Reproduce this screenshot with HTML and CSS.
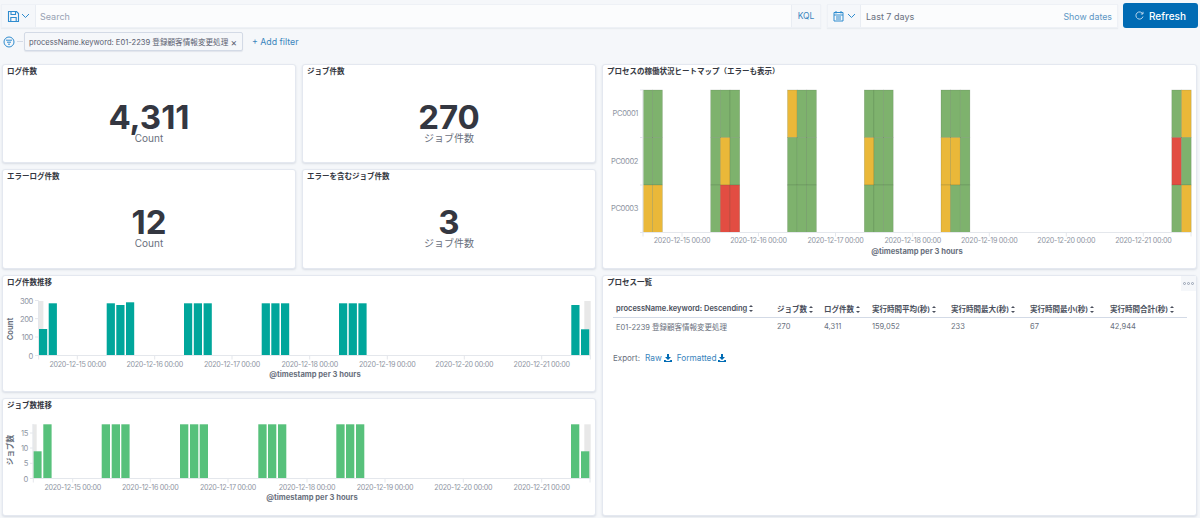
FILE: index.html
```html
<!DOCTYPE html>
<html lang="ja">
<head>
<meta charset="utf-8">
<title>Dashboard</title>
<link rel="stylesheet" href="styles.css">
</head>
<body>
<header class="topbar">
  <div class="query">
    <button class="prepend">
      <svg class="ic" width="13" height="13" viewBox="0 0 13 13"><path d="M1.5 1.5h8l2 2v8h-10z M4 1.5v3h4.500v-3 M3.800 11.500v-4h5.400v4" fill="none" stroke="#2f8ccf" stroke-width="1.100"/></svg>
      <svg class="chev" width="9" height="6" viewBox="0 0 9 6"><path d="M1 1l3.500 3.500L8 1" fill="none" stroke="#2f8ccf" stroke-width="1"/></svg>
    </button>
    <div class="search">Search</div>
    <div class="kql">KQL</div>
  </div>
  <div class="date">
    <button class="prepend cal">
      <svg class="ic" width="11" height="12" viewBox="0 0 11 12"><path d="M1 2.500h9v8.500h-9z M1 5h9 M3 1v2.500 M8 1v2.500 M3 7h5 M3 9h5" fill="none" stroke="#2f8ccf" stroke-width="1"/></svg>
      <svg class="chev" width="9" height="6" viewBox="0 0 9 6"><path d="M1 1l3.500 3.500L8 1" fill="none" stroke="#2f8ccf" stroke-width="1"/></svg>
    </button>
    <div class="range">Last 7 days</div>
    <div class="show">Show dates</div>
  </div>
  <button class="refresh">
    <svg width="9" height="9" viewBox="0 0 9 9"><path d="M7.800 3A3.600 3.600 0 1 0 8 5.500 M8 .8V3H5.800" fill="none" stroke="#b9d6ec" stroke-width="1"/></svg>
    Refresh
  </button>
</header>

<div class="filters">
  <svg class="filter-ic" width="12" height="12" viewBox="0 0 12 12"><circle cx="6" cy="6" r="5" fill="none" stroke="#2f8ccf" stroke-width="1"/><path d="M3 4.200h6 M4 6.200h4 M5 8.200h2" stroke="#2f8ccf" stroke-width="1"/></svg>
  <span class="dash-line"></span>
  <div class="pill"><span>processName.keyword: E01-2239 登録顧客情報変更処理</span><span class="x">×</span></div>
  <div class="add">+ Add filter</div>
</div>

<main class="dash">
  <section class="panel">
    <h2>ログ件数</h2>
    <div class="metric"><div class="num">4,311</div><div class="lab">Count</div></div>
  </section>
  <section class="panel">
    <h2>ジョブ件数</h2>
    <div class="metric"><div class="num">270</div><div class="lab">ジョブ件数</div></div>
  </section>
  <section class="panel heat">
    <h2>プロセスの稼働状況ヒートマップ（エラーも表示）</h2>
    <svg class="chart" width="593" height="187" viewBox="603 81 593 187">
      <g class="cells">
        <rect class="g" x="643" y="90" width="9.700" height="47.500"/><rect class="g" x="652.700" y="90" width="9.700" height="47.500"/>
        <rect class="g" x="643" y="137.500" width="9.700" height="47.500"/><rect class="g" x="652.700" y="137.500" width="9.700" height="47.500"/>
        <rect class="y" x="643" y="185" width="9.700" height="47.500"/><rect class="y" x="652.700" y="185" width="9.700" height="47.500"/>

        <rect class="g" x="710.700" y="90" width="9.700" height="47.500"/><rect class="g" x="720.300" y="90" width="9.700" height="47.500"/><rect class="g" x="730" y="90" width="9.700" height="47.500"/>
        <rect class="g" x="710.700" y="137.500" width="9.700" height="47.500"/><rect class="y" x="720.300" y="137.500" width="9.700" height="47.500"/><rect class="g" x="730" y="137.500" width="9.700" height="47.500"/>
        <rect class="g" x="710.700" y="185" width="9.700" height="47.500"/><rect class="r" x="720.300" y="185" width="9.700" height="47.500"/><rect class="r" x="730" y="185" width="9.700" height="47.500"/>

        <rect class="y" x="787.500" y="90" width="9.700" height="47.500"/><rect class="g" x="797.100" y="90" width="9.700" height="47.500"/><rect class="g" x="806.700" y="90" width="9.700" height="47.500"/>
        <rect class="g" x="787.500" y="137.500" width="9.700" height="47.500"/><rect class="g" x="797.100" y="137.500" width="9.700" height="47.500"/><rect class="g" x="806.700" y="137.500" width="9.700" height="47.500"/>
        <rect class="g" x="787.500" y="185" width="9.700" height="47.500"/><rect class="g" x="797.100" y="185" width="9.700" height="47.500"/><rect class="g" x="806.700" y="185" width="9.700" height="47.500"/>

        <rect class="g" x="864.300" y="90" width="9.700" height="47.500"/><rect class="g" x="873.900" y="90" width="9.700" height="47.500"/><rect class="g" x="883.500" y="90" width="9.700" height="47.500"/>
        <rect class="y" x="864.300" y="137.500" width="9.700" height="47.500"/><rect class="g" x="873.900" y="137.500" width="9.700" height="47.500"/><rect class="g" x="883.500" y="137.500" width="9.700" height="47.500"/>
        <rect class="g" x="864.300" y="185" width="9.700" height="47.500"/><rect class="g" x="873.900" y="185" width="9.700" height="47.500"/><rect class="g" x="883.500" y="185" width="9.700" height="47.500"/>

        <rect class="g" x="941" y="90" width="9.700" height="47.500"/><rect class="g" x="950.600" y="90" width="9.700" height="47.500"/><rect class="g" x="960.200" y="90" width="9.700" height="47.500"/>
        <rect class="y" x="941" y="137.500" width="9.700" height="47.500"/><rect class="y" x="950.600" y="137.500" width="9.700" height="47.500"/><rect class="g" x="960.200" y="137.500" width="9.700" height="47.500"/>
        <rect class="y" x="941" y="185" width="9.700" height="47.500"/><rect class="g" x="950.600" y="185" width="9.700" height="47.500"/><rect class="g" x="960.200" y="185" width="9.700" height="47.500"/>

        <rect class="g" x="1171.800" y="90" width="9.700" height="47.500"/><rect class="y" x="1181.500" y="90" width="9.700" height="47.500"/>
        <rect class="r" x="1171.800" y="137.500" width="9.700" height="47.500"/><rect class="g" x="1181.500" y="137.500" width="9.700" height="47.500"/>
        <rect class="g" x="1171.800" y="185" width="9.700" height="47.500"/><rect class="y" x="1181.500" y="185" width="9.700" height="47.500"/>
      </g>
      <path class="axis" d="M643 232.500H1191 M643 90V232.500 M640 90h3 M640 137.500h3 M640 185h3 M640 232.500h3 M643 232.500v4 M682 232.500v4 M758.500 232.500v4 M835.500 232.500v4 M912.700 232.500v4 M989.300 232.500v4 M1066.300 232.500v4 M1143.300 232.500v4 M1191 232.500v4"/>
      <text class="yl" x="638" y="116.300">PC0001</text>
      <text class="yl" x="638" y="163.800">PC0002</text>
      <text class="yl" x="638" y="211.300">PC0003</text>
      <text class="xl" x="682" y="243">2020-12-15 00:00</text>
      <text class="xl" x="758.500" y="243">2020-12-16 00:00</text>
      <text class="xl" x="835.500" y="243">2020-12-17 00:00</text>
      <text class="xl" x="912.700" y="243">2020-12-18 00:00</text>
      <text class="xl" x="989.300" y="243">2020-12-19 00:00</text>
      <text class="xl" x="1066.300" y="243">2020-12-20 00:00</text>
      <text class="xl" x="1143.300" y="243">2020-12-21 00:00</text>
      <text class="at" x="917" y="254">@timestamp per 3 hours</text>
    </svg>
  </section>

  <section class="panel">
    <h2>エラーログ件数</h2>
    <div class="metric"><div class="num">12</div><div class="lab">Count</div></div>
  </section>
  <section class="panel">
    <h2>エラーを含むジョブ件数</h2>
    <div class="metric"><div class="num">3</div><div class="lab">ジョブ件数</div></div>
  </section>

  <section class="panel wide">
    <h2>ログ件数推移</h2>
    <svg class="chart" width="592" height="99" viewBox="3 292 592 99">
      <rect class="bg" x="38.400" y="301" width="5" height="54.500"/>
      <rect class="bg" x="584.300" y="301" width="6.400" height="54.500"/>
      <g class="teal">
        <rect x="39" y="329" width="8.200" height="26.500"/><rect x="48.700" y="303.300" width="8.200" height="52.200"/>
        <rect x="106.700" y="303.300" width="8.200" height="52.200"/><rect x="116.300" y="305" width="8.200" height="50.500"/><rect x="126" y="302.300" width="8.200" height="53.200"/>
        <rect x="184" y="303.300" width="8.200" height="52.200"/><rect x="193.800" y="303.300" width="8.200" height="52.200"/><rect x="203.600" y="303.300" width="8.200" height="52.200"/>
        <rect x="261.700" y="303.300" width="8.200" height="52.200"/><rect x="271.300" y="303.300" width="8.200" height="52.200"/><rect x="281" y="303.300" width="8.200" height="52.200"/>
        <rect x="339" y="303.300" width="8.200" height="52.200"/><rect x="348.700" y="303.300" width="8.200" height="52.200"/><rect x="358.400" y="303.300" width="8.200" height="52.200"/>
        <rect x="571.300" y="305" width="8.200" height="50.500"/><rect x="581" y="329.300" width="8.200" height="26.200"/>
      </g>
      <path class="axis" d="M38.500 355.500H590.500 M38.500 300.500V355.500 M35 300.500h3.500 M35 318.700h3.500 M35 337h3.500 M35 355.500h3.500 M38.700 355.500v4 M77.300 355.500v4 M154.700 355.500v4 M232 355.500v4 M309.700 355.500v4 M387.300 355.500v4 M464.300 355.500v4 M541.700 355.500v4 M590.300 355.500v4"/>
      <text class="yl" x="33" y="303.500">300</text>
      <text class="yl" x="33" y="322">200</text>
      <text class="yl" x="33" y="340.300">100</text>
      <text class="yl" x="33" y="358.500">0</text>
      <text class="at" transform="translate(13 329) rotate(-90)">Count</text>
      <text class="xl" x="77.700" y="366.500">2020-12-15 00:00</text>
      <text class="xl" x="154.700" y="366.500">2020-12-16 00:00</text>
      <text class="xl" x="232" y="366.500">2020-12-17 00:00</text>
      <text class="xl" x="309.700" y="366.500">2020-12-18 00:00</text>
      <text class="xl" x="387.300" y="366.500">2020-12-19 00:00</text>
      <text class="xl" x="464.300" y="366.500">2020-12-20 00:00</text>
      <text class="xl" x="541.700" y="366.500">2020-12-21 00:00</text>
      <text class="at" x="315" y="377">@timestamp per 3 hours</text>
    </svg>
  </section>

  <section class="panel table-panel">
    <h2>プロセス一覧</h2>
    <div class="opts"><i></i><i></i><i></i></div>
    <div class="table-wrap">
      <table>
        <thead>
          <tr>
            <th class="c1">processName.keyword: Descending<span class="sort"></span></th>
            <th class="c2">ジョブ数<span class="sort"></span></th>
            <th class="c3">ログ件数<span class="sort"></span></th>
            <th class="c4">実行時間平均(秒)<span class="sort"></span></th>
            <th class="c5">実行時間最大(秒)<span class="sort"></span></th>
            <th class="c6">実行時間最小(秒)<span class="sort"></span></th>
            <th class="c7">実行時間合計(秒)<span class="sort"></span></th>
          </tr>
        </thead>
        <tbody>
          <tr>
            <td>E01-2239 登録顧客情報変更処理</td>
            <td>270</td><td>4,311</td><td>159,052</td><td>233</td><td>67</td><td>42,944</td>
          </tr>
        </tbody>
      </table>
      <div class="export">
        <span class="export-label">Export:</span>
        <a>Raw <svg width="8" height="8" viewBox="0 0 8 8"><path d="M3 0h2v3h2L4 6 1 3h2z M0 6h1.500l1 1h3l1-1H8v2H0z" fill="#006bb4"/></svg></a>
        <a>Formatted <svg width="8" height="8" viewBox="0 0 8 8"><path d="M3 0h2v3h2L4 6 1 3h2z M0 6h1.500l1 1h3l1-1H8v2H0z" fill="#006bb4"/></svg></a>
      </div>
    </div>
  </section>

  <section class="panel wide">
    <h2>ジョブ数推移</h2>
    <svg class="chart" width="592" height="100" viewBox="3 415 592 100">
      <rect class="bg" x="32.700" y="424.300" width="4" height="54"/>
      <rect class="bg" x="584.300" y="424.300" width="6.400" height="54"/>
      <g class="mint">
        <rect x="33.300" y="451.300" width="8.300" height="27"/><rect x="43.300" y="424.300" width="8.300" height="54"/>
        <rect x="101.700" y="424.300" width="8.300" height="54"/><rect x="111.700" y="424.300" width="8.300" height="54"/><rect x="121.300" y="424.300" width="8.300" height="54"/>
        <rect x="180" y="424.300" width="8.300" height="54"/><rect x="190" y="424.300" width="8.300" height="54"/><rect x="199.700" y="424.300" width="8.300" height="54"/>
        <rect x="258.300" y="424.300" width="8.300" height="54"/><rect x="268" y="424.300" width="8.300" height="54"/><rect x="278" y="424.300" width="8.300" height="54"/>
        <rect x="336.300" y="424.300" width="8.300" height="54"/><rect x="346" y="424.300" width="8.300" height="54"/><rect x="356" y="424.300" width="8.300" height="54"/>
        <rect x="571" y="424.300" width="8.300" height="54"/><rect x="581" y="451.300" width="8.300" height="27"/>
      </g>
      <path class="axis" d="M33 478.500H590.500 M33 424V478.500 M30 433h3 M30 448h3 M30 463.300h3 M30 478.500h3 M33.300 478.500v4 M72.700 478.500v4 M150.300 478.500v4 M228 478.500v4 M307 478.500v4 M385 478.500v4 M463.300 478.500v4 M541.700 478.500v4 M590 478.500v4"/>
      <text class="yl" x="28" y="436">15</text>
      <text class="yl" x="28" y="451">10</text>
      <text class="yl" x="28" y="466.300">5</text>
      <text class="yl" x="28" y="481.500">0</text>
      <text class="at" transform="translate(13 450) rotate(-90)">ジョブ数</text>
      <text class="xl" x="72.700" y="490">2020-12-15 00:00</text>
      <text class="xl" x="150.300" y="490">2020-12-16 00:00</text>
      <text class="xl" x="228" y="490">2020-12-17 00:00</text>
      <text class="xl" x="307" y="490">2020-12-18 00:00</text>
      <text class="xl" x="385" y="490">2020-12-19 00:00</text>
      <text class="xl" x="463.300" y="490">2020-12-20 00:00</text>
      <text class="xl" x="541.700" y="490">2020-12-21 00:00</text>
      <text class="at" x="312" y="500">@timestamp per 3 hours</text>
    </svg>
  </section>
</main>
</body>
</html>
```
FILE: styles.css
```css
* { box-sizing: border-box; }
html, body { margin: 0; height: 518px; overflow: hidden; }
body {
  background: #f5f7fa;
  color: #343741;
  font-family: Inter, "Noto Sans CJK JP", sans-serif;
  font-size: 9px;
}
button { font: inherit; border: 0; padding: 0; background: none; }

.topbar { display: flex; height: 25px; margin: 3px 2px 0 1px; }
.query, .date {
  display: flex;
  align-items: center;
  height: 24px;
  margin-top: 1px;
  background: #fbfcfd;
  border: 1px solid #eef1f6;
  box-shadow: 0 1px 1px rgba(152, 162, 179, .12);
}
.query { width: 820px; }
.date { width: 291px; margin: 1px 5px 0 6px; }
.prepend {
  display: flex;
  align-items: center;
  gap: 1px;
  height: 100%;
  width: 34px;
  padding-left: 5px;
  background: #f5f7fa;
  border-right: 1px solid #e9edf3;
}
.cal { width: 33px; padding-left: 5px; gap: 3px; }
.search { flex: 1; padding-left: 4px; color: #98a2b3; }
.kql {
  width: 29px;
  height: 100%;
  line-height: 22px;
  text-align: center;
  color: #3a85bd;
  font-size: 8.500px;
  background: #f5f7fa;
  border-left: 1px solid #e9edf3;
}
.range { flex: 1; padding-left: 5px; color: #69707d; }
.show { padding-right: 5px; color: #5b96c4; font-size: 8.800px; }
.refresh {
  display: flex;
  align-items: center;
  justify-content: center;
  gap: 5px;
  width: 75px;
  background: #006bb4;
  color: #fff;
  font-size: 10px;
  font-weight: 500;
  border-radius: 3px;
}

.filters { display: flex; align-items: center; height: 19px; margin: 4px 0 0 3px; }
.filter-ic { flex: none; }
.dash-line { width: 6px; height: 1px; margin: 0 1px 0 2px; background: #d3dae6; }
.pill {
  display: flex;
  align-items: center;
  justify-content: space-between;
  flex: none;
  width: 219px;
  height: 19px;
  padding: 0 5px 0 4px;
  font-size: 7.600px;
  color: #5a6070;
  background: #f5f7fa;
  border: 1px solid #d3dae6;
  border-radius: 2px;
  box-shadow: 0 1px 1px rgba(152, 162, 179, .2);
  white-space: nowrap;
}
.x { font-size: 10px; }
.add { margin-left: 9px; color: #3a85bd; font-size: 8.800px; }

.dash {
  display: grid;
  grid-template-columns: 294px 294px 595px;
  grid-template-rows: 99px 100px 117px 118px;
  gap: 6px;
  margin: 13px 0 0 2px;
}
.panel {
  position: relative;
  display: flex;
  flex-direction: column;
  min-width: 0;
  background: #fff;
  border: 1px solid #e4e8f0;
  border-radius: 3px;
  box-shadow: 0 1px 2px rgba(152, 162, 179, .3);
}
.panel h2 {
  flex: none;
  height: 16px;
  margin: 0;
  padding: 1px 0 0 4px;
  font-size: 7.500px;
  line-height: 12px;
  font-weight: 600;
  color: #343741;
  white-space: nowrap;
}
.heat { grid-column: 3; grid-row: 1 / span 2; }
.wide { grid-column: 1 / span 2; }
.table-panel { grid-column: 3; grid-row: 3 / span 2; }

.metric { flex: 1; display: flex; flex-direction: column; align-items: center; padding-top: 20px; }
.num {
  font-size: 33px;
  line-height: 32px;
  font-weight: 700;
  color: #343741;
}
.lab { font-size: 10px; line-height: 10px; color: #69707d; }

.chart { display: block; }
.axis { fill: none; stroke: #e4e7ec; stroke-width: 1; }
.cells rect { stroke: rgba(70, 90, 60, .28); stroke-width: .6; }
.g { fill: #7eb26d; }
.y { fill: #eab839; }
.r { fill: #e24d42; }
.bg { fill: #e8e8e8; }
.teal rect { fill: #00a69b; }
.mint rect { fill: #57c17b; }
.xl { font-size: 7.200px; letter-spacing: -.3px; fill: #8f96a3; text-anchor: middle; }
.yl { font-size: 7.600px; letter-spacing: -.4px; fill: #8f96a3; text-anchor: end; }
.at { font-size: 7.600px; font-weight: 700; fill: #69707d; text-anchor: middle; }

.opts {
  position: absolute;
  top: 0;
  right: 0;
  display: flex;
  align-items: center;
  justify-content: center;
  gap: 1px;
  width: 15px;
  height: 15px;
  background: #f5f7fa;
}
.opts i { width: 3px; height: 3px; border: 1px solid #98a2b3; border-radius: 50%; }

.table-wrap { padding: 7px 9px 0 10px; }
table { width: 574px; border-collapse: collapse; table-layout: fixed; }
th, td { padding: 0 0 0 3px; text-align: left; white-space: nowrap; }
th {
  height: 18px;
  padding-top: 2px;
  font-size: 7.500px;
  font-weight: 600;
  color: #4a4f5c;
  border-bottom: 1px solid #d3dae6;
}
td { height: 18px; font-size: 7.500px; color: #69707d; }
.c1 { width: 161px; }
.c2 { width: 47px; }
.c3 { width: 48px; }
.c4 { width: 79px; }
.c5 { width: 79px; }
.c6 { width: 80px; }
.sort {
  display: inline-block;
  position: relative;
  width: 5px;
  height: 7px;
  margin-left: 2px;
  vertical-align: -.5px;
}
.sort::before, .sort::after {
  content: "";
  position: absolute;
  left: 0;
  width: 0;
  height: 0;
  border-left: 2.200px solid transparent;
  border-right: 2.200px solid transparent;
}
.sort::before { top: 0; border-bottom: 2.500px solid #4a4f5c; }
.sort::after { bottom: 0; border-top: 2.500px solid #4a4f5c; }
.export { display: flex; align-items: center; gap: 5px; margin: 18px 0 0; font-size: 8.300px; color: #69707d; }
.export-label { font-size: 8px; }
.export a { display: flex; align-items: center; gap: 2px; color: #3a85bd; }
```
